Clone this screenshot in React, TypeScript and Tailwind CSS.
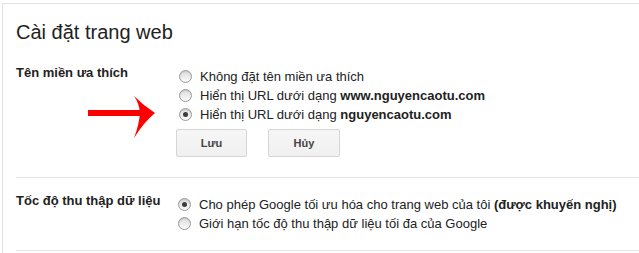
import React from "react";

type Option = { label: React.ReactNode; checked?: boolean };

const Radio: React.FC<{ checked?: boolean }> = ({ checked }) => (
  <span className="relative inline-flex h-[13px] w-[13px] shrink-0 items-center justify-center rounded-full border border-[#9a9a9a] bg-gradient-to-b from-[#dcdcdc] to-[#fbfbfb] shadow-[inset_0_1px_1px_rgba(0,0,0,0.12)]">
    {checked && <span className="h-[5px] w-[5px] rounded-full bg-[#3c3c3c]" />}
  </span>
);

const RadioList: React.FC<{ options: Option[] }> = ({ options }) => (
  <div className="flex flex-col">
    {options.map((opt, i) => (
      <label key={i} className="flex h-[19px] items-center leading-[19px]">
        <span className="ml-[-1px] mr-[8px] mt-[-1px] flex">
          <Radio checked={opt.checked} />
        </span>
        <span>{opt.label}</span>
      </label>
    ))}
  </div>
);

const App: React.FC = () => {
  const domainOptions: Option[] = [
    { label: "Không đặt tên miền ưa thích" },
    {
      label: (
        <>
          Hiển thị URL dưới dạng <b>www.nguyencaotu.com</b>
        </>
      ),
    },
    {
      label: (
        <>
          Hiển thị URL dưới dạng <b>nguyencaotu.com</b>
        </>
      ),
      checked: true,
    },
  ];

  const crawlOptions: Option[] = [
    {
      label: (
        <>
          Cho phép Google tối ưu hóa cho trang web của tôi <b>(được khuyến nghị)</b>
        </>
      ),
      checked: true,
    },
    { label: "Giới hạn tốc độ thu thập dữ liệu tối đa của Google" },
  ];

  return (
    <div className="relative h-[253px] w-[639px] overflow-hidden bg-white font-['Liberation_Sans',Arial,sans-serif] text-[13px] text-[#222]">
      <div className="ml-[2px] mt-[3px] h-[250px] border-l border-t border-[#e3e3e3] pl-[13px] pt-[16px]">
        {/* Title */}
        <h1 className="text-[20px] leading-[24px] font-normal text-[#222]">Cài đặt trang web</h1>

        {/* Preferred domain */}
        <div className="mt-[19px] flex">
          <div className="w-[164px] shrink-0 font-bold leading-[19px]">Tên miền ưa thích</div>
          <div className="mt-[4px] flex flex-col">
            <RadioList options={domainOptions} />
            <div className="ml-[-4px] mt-[5px] flex gap-[21px]">
              <button className="h-[28px] w-[71px] rounded-[2px] border border-[#d6d6d6] bg-gradient-to-b from-[#f6f6f6] to-[#f0f0f0] text-[11px] font-bold text-[#444]">
                Lưu
              </button>
              <button className="h-[28px] w-[72px] rounded-[2px] border border-[#d6d6d6] bg-gradient-to-b from-[#f6f6f6] to-[#f0f0f0] text-[11px] font-bold text-[#444]">
                Hủy
              </button>
            </div>
          </div>
        </div>

        <div className="mt-[20px] border-t border-[#e5e5e5]" />

        {/* Crawl rate */}
        <div className="mt-[13px] flex">
          <div className="w-[163px] shrink-0 font-bold leading-[19px]">Tốc độ thu thập dữ liệu</div>
          <div className="mt-[4px]">
            <RadioList options={crawlOptions} />
          </div>
        </div>

        <div className="mt-[17px] border-t border-[#e5e5e5]" />
      </div>

      {/* Red annotation arrow */}
      <svg className="absolute left-0 top-0" width="639" height="253" viewBox="0 0 639 253">
        <rect x="88" y="110" width="52" height="6" fill="#ff0000" />
        <path d="M134 96 Q144 106 155 113 Q144 122 134 138 Q139 125 140 113 Q139 103 134 96 Z" fill="#ff0000" />
      </svg>
    </div>
  );
};

export default App;
